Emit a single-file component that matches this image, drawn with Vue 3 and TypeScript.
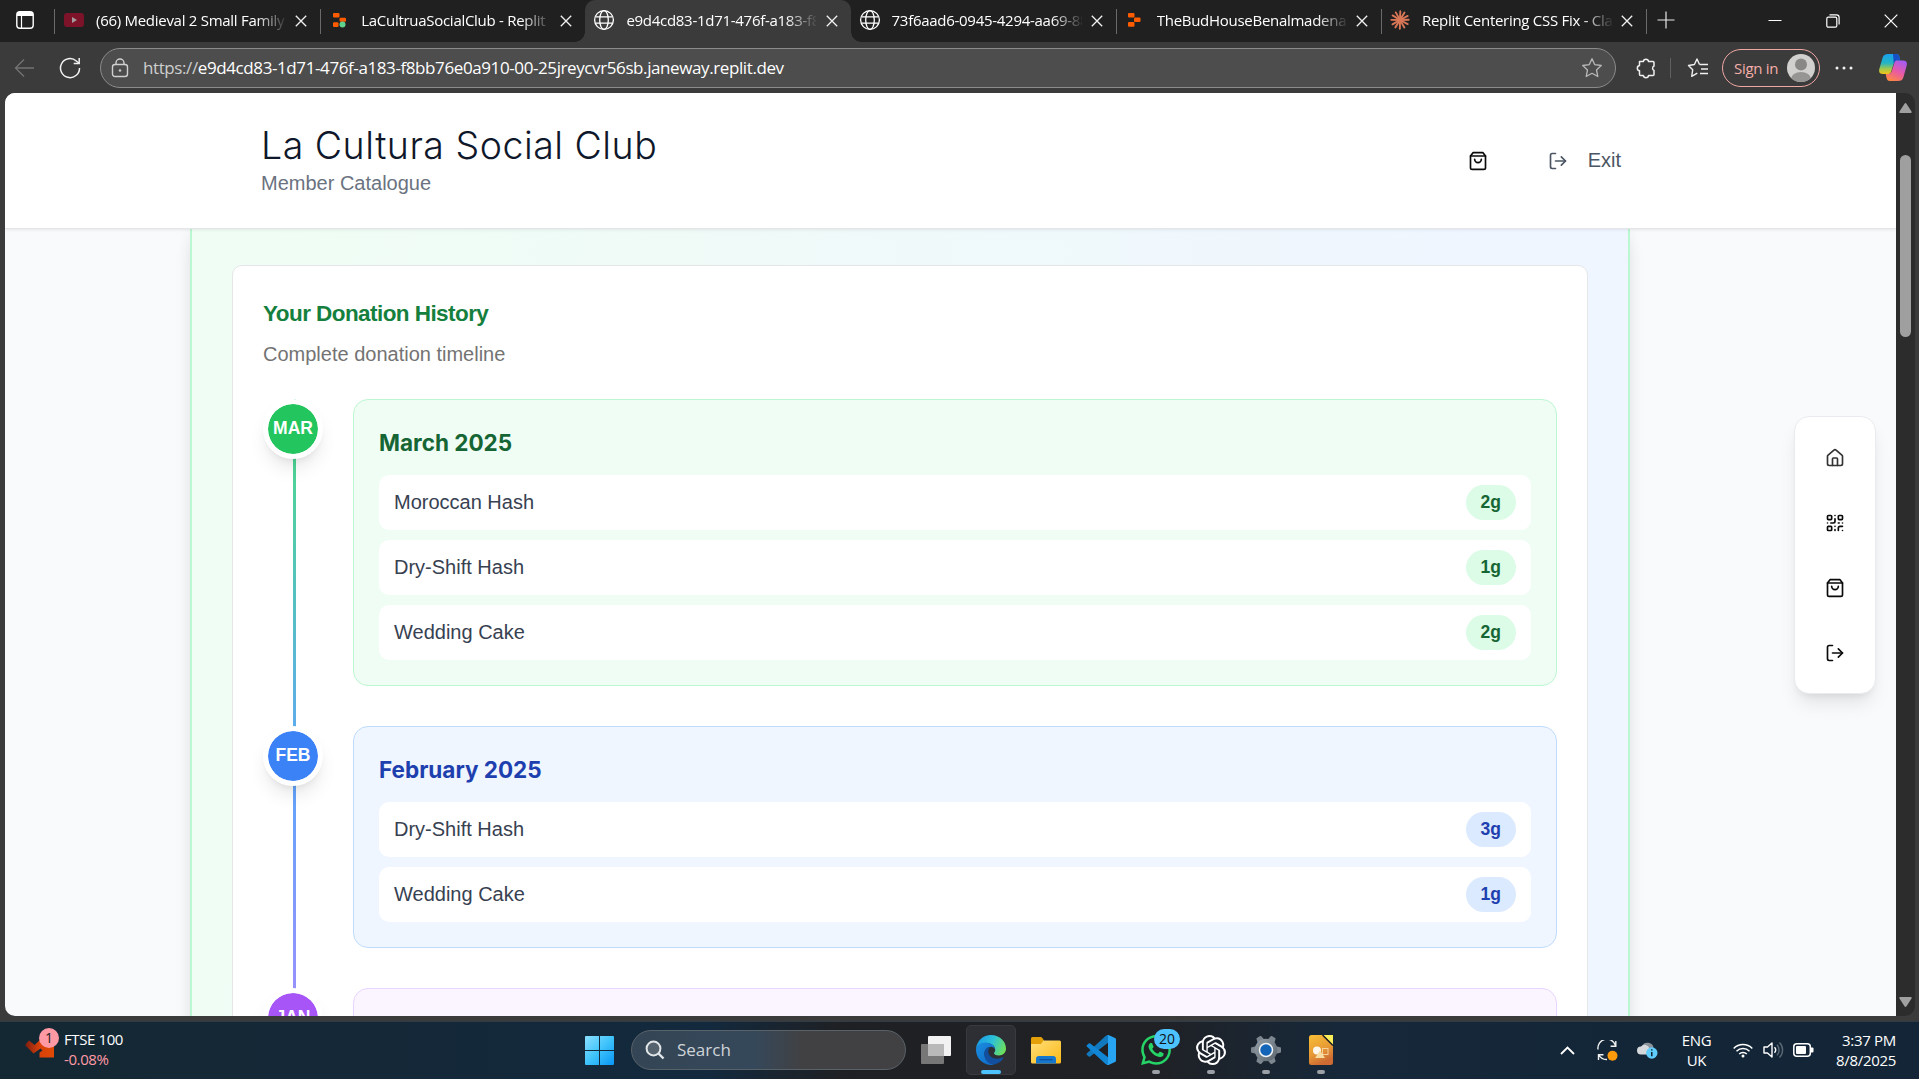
<script setup lang="ts">
interface Tab {
  title: string
  icon: 'youtube' | 'replit' | 'replitMono' | 'globe' | 'claude'
  active?: boolean
  separator?: boolean
  spacing: string
}

interface Month {
  abbr: string
  name: string
  tone: 'green' | 'blue' | 'purple'
  items: { name: string; amount: string }[]
}

const tabs: Tab[] = [
  { title: '(66) Medieval 2 Small Family Only', icon: 'youtube', separator: true, spacing: '-0.28px' },
  { title: 'LaCultruaSocialClub - Replit', icon: 'replit', spacing: '-0.28px' },
  { title: 'e9d4cd83-1d71-476f-a183-f8bb', icon: 'globe', active: true, spacing: '-0.28px' },
  { title: '73f6aad6-0945-4294-aa69-88', icon: 'globe', separator: true, spacing: '-0.28px' },
  { title: 'TheBudHouseBenalmadena - Replit', icon: 'replitMono', separator: true, spacing: '-0.28px' },
  { title: 'Replit Centering CSS Fix - Claude', icon: 'claude', separator: true, spacing: '-0.28px' },
]

const months: Month[] = [
  {
    abbr: 'MAR',
    name: 'March 2025',
    tone: 'green',
    items: [
      { name: 'Moroccan Hash', amount: '2g' },
      { name: 'Dry-Shift Hash', amount: '1g' },
      { name: 'Wedding Cake', amount: '2g' },
    ],
  },
  {
    abbr: 'FEB',
    name: 'February 2025',
    tone: 'blue',
    items: [
      { name: 'Dry-Shift Hash', amount: '3g' },
      { name: 'Wedding Cake', amount: '1g' },
    ],
  },
  { abbr: 'JAN', name: 'January 2025', tone: 'purple', items: [{ name: 'Moroccan Hash', amount: '1g' }] },
]

const rays = [2, 31, 62, 88, 118, 150, 181, 212, 240, 271, 302, 331]
const gearTeeth = [30, 90, 150, 210, 270, 330]
</script>

<template>
  <div class="screen">
    <div class="tabstrip">
      <div class="workspaces">
        <svg width="20" height="20" viewBox="0 0 20 20" fill="none">
          <rect x="1.8" y="1.8" width="16.4" height="16.4" rx="3" stroke="#fff" stroke-width="1.4" />
          <path d="M2 6V4.5A2.8 2.8 0 0 1 4.8 1.8h10.400A2.800 2.800 0 0 1 18.200 4.500V6z" fill="#fff" />
          <path d="M6.500 6v12" stroke="#fff" stroke-width="1.200" />
        </svg>
      </div>
      <div v-for="tab in tabs" :key="tab.title" class="tab" :class="{ active: tab.active, sep: tab.separator }">
        <span class="favicon">
          <svg v-if="tab.icon === 'youtube'" width="20" height="20" viewBox="0 0 20 20">
            <rect x="0" y="3" width="20" height="14" rx="3" fill="#7d1329" />
            <path d="M8 7l5 3-5 3z" fill="#a59a9c" />
          </svg>
          <svg v-else-if="tab.icon === 'replit'" width="20" height="20" viewBox="0 0 20 20">
            <rect x="4" y="3" width="6.500" height="4.500" rx="1" fill="#ff5b00" />
            <rect x="10.500" y="7.800" width="6.500" height="4" rx="1" fill="#ff5b00" />
            <rect x="4" y="12.300" width="5.500" height="4.700" rx="1" fill="#ff5b00" />
            <circle cx="13.500" cy="14.500" r="3" fill="#5fd38d" />
          </svg>
          <svg v-else-if="tab.icon === 'replitMono'" width="20" height="20" viewBox="0 0 20 20">
            <rect x="3" y="3" width="6.500" height="4.500" rx="1" fill="#ff5b00" />
            <rect x="9" y="7.500" width="6.500" height="4.500" rx="1" fill="#ff5b00" />
            <rect x="3" y="12" width="6.500" height="4.700" rx="1" fill="#ff5b00" />
          </svg>
          <svg v-else-if="tab.icon === 'globe'" width="22" height="22" viewBox="0 0 22 22" fill="none" stroke="#fff" stroke-width="1.300">
            <circle cx="11" cy="11" r="9.400" />
            <ellipse cx="11" cy="11" rx="4.300" ry="9.400" />
            <path d="M2.500 7.800h17M2.500 14.200h17" />
          </svg>
          <svg v-else width="20" height="20" viewBox="-10 -10 20 20" stroke="#d97757" stroke-width="1.900" stroke-linecap="round">
            <path v-for="r in rays" :key="r" d="M0-1V-8.700" :transform="`rotate(${r})`" />
          </svg>
        </span>
        <span class="tabtitle"><span :style="{ letterSpacing: tab.spacing }">{{ tab.title }}</span></span>
        <svg class="close" width="12" height="12" viewBox="0 0 12 12" stroke="#f2f2f2" stroke-width="1.300">
          <path d="M.8.8l10.400 10.400M11.200.8L.8 11.200" />
        </svg>
      </div>
      <svg class="newtab" width="18" height="18" viewBox="0 0 18 18" stroke="#e8e8e8" stroke-width="1.200"><path d="M9 .5v17M.5 9h17" /></svg>
      <div class="wincontrols">
        <svg width="14" height="14" viewBox="0 0 14 14" stroke="#fff"><path d="M.5 6.500h13" /></svg>
        <svg width="14" height="14" viewBox="0 0 14 14" stroke="#fff" stroke-width="1.200" fill="none">
          <rect x=".8" y="3.200" width="10" height="10" rx="1.500" />
          <path d="M3.500.9H10.500a2.600 2.600 0 0 1 2.600 2.600V10.500" />
        </svg>
        <svg width="14" height="14" viewBox="0 0 14 14" stroke="#fff" stroke-width="1.200"><path d="M.7.7l12.600 12.600M13.300.7L.7 13.300" /></svg>
      </div>
    </div>

    <div class="toolbar">
      <svg class="back" width="21" height="20" viewBox="0 0 21 20" fill="none" stroke="#737373" stroke-width="1.300"><path d="M20 10H1.500M10 1.500L1.500 10l8.500 8.500" /></svg>
      <svg class="reload" width="22" height="22" viewBox="0 0 22 22" fill="none" stroke="#f2f2f2" stroke-width="1.500">
        <path d="M20.500 11A9.500 9.500 0 1 1 17.300 4L20 6.300" />
        <path d="M20.200 1v5.500h-5.500" />
      </svg>
      <div class="urlbar">
        <svg width="18" height="20" viewBox="0 0 18 20" fill="none" stroke="#d0d0d0" stroke-width="1.400">
          <rect x="1.500" y="6.500" width="15" height="12" rx="2.500" />
          <path d="M5 6.500V5a4 4 0 0 1 8 0v1.500" />
          <circle cx="9" cy="12.500" r="1" fill="#d0d0d0" stroke-width=".6" />
        </svg>
        <span class="url"><span class="scheme">https://</span>e9d4cd83-1d71-476f-a183-f8bb76e0a910-00-25jreycvr56sb.janeway.replit.dev</span>
        <svg class="star" width="22" height="22" viewBox="0 0 22 22" fill="none" stroke="#b8b8b8" stroke-width="1.300" stroke-linejoin="round">
          <path d="M11 1.700l2.800 6 6.500.8-4.800 4.500 1.300 6.500L11 16.300l-5.800 3.200 1.300-6.500L1.700 8.500l6.500-.8z" />
        </svg>
      </div>
      <svg class="puzzle" width="22" height="22" viewBox="0 0 22 22" fill="none" stroke="#f0f0f0" stroke-width="1.500" stroke-linejoin="round">
        <path d="M4.500 4.500h3.800a2.700 2.700 0 0 1 5.300 0H18a1 1 0 0 1 1 1v3.500a2.400 2.400 0 0 0 0 4.400v4.100a1 1 0 0 1-1 1h-4.400a2.700 2.700 0 0 1-5.300 0H5.500a1 1 0 0 1-1-1v-3.700a2.700 2.700 0 0 1 0-5.300z" />
      </svg>
      <span class="tooldivider"></span>
      <svg class="favorites" width="22" height="22" viewBox="0 0 22 22" fill="none" stroke="#f0f0f0" stroke-width="1.400" stroke-linejoin="round">
        <path d="M12.500 7.500L10 2 7.400 7.500 1.500 8.500l4.200 4.300-1 6.500L10.300 16.200" />
        <path d="M12.500 7.500h8.500M14 12h7M13 16.500h8" />
      </svg>
      <div class="signin">
        <span>Sign in</span>
        <svg width="28" height="28" viewBox="0 0 28 28">
          <defs><clipPath id="avatarClip"><circle cx="14" cy="14" r="14" /></clipPath></defs>
          <g clip-path="url(#avatarClip)">
            <rect width="28" height="28" fill="#d2d0ce" />
            <circle cx="14" cy="10.500" r="6" fill="#8a8886" />
            <ellipse cx="14" cy="25" rx="10" ry="7" fill="#979593" />
          </g>
        </svg>
      </div>
      <svg class="dots" width="18" height="4" viewBox="0 0 18 4" fill="#f2f2f2"><circle cx="2" cy="2" r="1.500" /><circle cx="9" cy="2" r="1.500" /><circle cx="16" cy="2" r="1.500" /></svg>
      <svg class="copilot" width="28" height="27" viewBox="0 0 28 27">
        <defs>
          <linearGradient id="cpa" x1="0" y1="0" x2="0" y2="1"><stop offset="0" stop-color="#1aa0ee" /><stop offset=".45" stop-color="#22b5c5" /><stop offset=".75" stop-color="#a5c84a" /><stop offset="1" stop-color="#f5c518" /></linearGradient>
          <linearGradient id="cpb" x1=".7" y1="0" x2=".2" y2="1"><stop offset="0" stop-color="#a75bf0" /><stop offset=".5" stop-color="#e85aa5" /><stop offset="1" stop-color="#ff8a3c" /></linearGradient>
        </defs>
        <path d="M9 0h8c2.500 0 3 1.500 3.700 4l.6 2.500h-3c-2 0-3 1-3.600 3l-2.500 8c-.6 2-1.500 2.500-3.500 2.500H4c-3 0-4.500-1.500-3.700-5L3.500 4C4.500 1 6 0 9 0z" fill="url(#cpa)" />
        <path d="M14 0h3c2.500 0 3 1.500 3.700 4l.6 2.500h-3c-2 0-3 1-3.600 3z" fill="#1550c8" />
        <path d="M19 27h-8c-2.500 0-3-1.500-3.700-4L6.700 20h2.500c2 0 3-1 3.600-3l2.500-8c.6-2 1.500-2.500 3.500-2.500H24c3 0 4.500 1.500 3.700 5L24.500 23c-1 3-2.500 4-5.500 4z" fill="url(#cpb)" />
      </svg>
    </div>

    <div class="window">
      <div class="viewport">
        <header class="siteheader">
          <div class="brand">
            <h1>La Cultura Social Club</h1>
            <p>Member Catalogue</p>
          </div>
          <nav class="actions">
            <svg class="lucide bag" viewBox="0 0 24 24"><path d="M6 2 3 6v14a2 2 0 0 0 2 2h14a2 2 0 0 0 2-2V6l-3-4Z" /><path d="M3 6h18" /><path d="M16 10a4 4 0 0 1-8 0" /></svg>
            <span class="exit">
              <svg class="lucide" viewBox="0 0 24 24"><path d="M9 21H5a2 2 0 0 1-2-2V5a2 2 0 0 1 2-2h4" /><path d="m16 17 5-5-5-5" /><path d="M21 12H9" /></svg>
              <span>Exit</span>
            </span>
          </nav>
        </header>

        <main class="content">
          <section class="panel">
            <div class="history">
              <h2>Your Donation History</h2>
              <p class="subtitle">Complete donation timeline</p>
              <div class="timeline">
                <div class="track"></div>
                <article v-for="m in months" :key="m.abbr" class="month" :class="m.tone">
                  <div class="marker">{{ m.abbr }}</div>
                  <div class="card">
                    <h3>{{ m.name }}</h3>
                    <div class="rows">
                      <div v-for="item in m.items" :key="item.name" class="row">
                        <span>{{ item.name }}</span>
                        <span class="amount">{{ item.amount }}</span>
                      </div>
                    </div>
                  </div>
                </article>
              </div>
            </div>
          </section>
        </main>

        <aside class="dock">
          <svg class="lucide home" viewBox="0 0 24 24"><path d="M15 21v-8a1 1 0 0 0-1-1h-4a1 1 0 0 0-1 1v8" /><path d="M3 10a2 2 0 0 1 .709-1.528l7-5.999a2 2 0 0 1 2.582 0l7 5.999A2 2 0 0 1 21 10v9a2 2 0 0 1-2 2H5a2 2 0 0 1-2-2z" /></svg>
          <svg class="lucide" viewBox="0 0 24 24"><rect width="5" height="5" x="3" y="3" rx="1" /><rect width="5" height="5" x="16" y="3" rx="1" /><rect width="5" height="5" x="3" y="16" rx="1" /><path d="M21 16h-3a2 2 0 0 0-2 2v3" /><path d="M21 21v.01" /><path d="M12 7v3a2 2 0 0 1-2 2H7" /><path d="M3 12h.01" /><path d="M12 3h.01" /><path d="M12 16v.01" /><path d="M16 12h1" /><path d="M21 12v.01" /><path d="M12 21v-1" /></svg>
          <svg class="lucide" viewBox="0 0 24 24"><path d="M6 2 3 6v14a2 2 0 0 0 2 2h14a2 2 0 0 0 2-2V6l-3-4Z" /><path d="M3 6h18" /><path d="M16 10a4 4 0 0 1-8 0" /></svg>
          <svg class="lucide" viewBox="0 0 24 24"><path d="M9 21H5a2 2 0 0 1-2-2V5a2 2 0 0 1 2-2h4" /><path d="m16 17 5-5-5-5" /><path d="M21 12H9" /></svg>
        </aside>
      </div>
      <div class="scrollbar">
        <svg width="13" height="10" viewBox="0 0 13 10" fill="#a0a0a0"><path d="M5.500.8a1.200 1.200 0 0 1 2 0L12.500 8.500a1 1 0 0 1-.8 1.500H1.300a1 1 0 0 1-.8-1.500z" /></svg>
        <div class="thumb"></div>
        <svg class="down" width="13" height="10" viewBox="0 0 13 10" fill="#a0a0a0"><path d="M5.500 9.200a1.200 1.200 0 0 0 2 0L12.500 1.500a1 1 0 0 0-.8-1.500H1.300a1 1 0 0 0-.8 1.500z" /></svg>
      </div>
    </div>

    <footer class="taskbar">
      <div class="widget">
        <div class="stock">
          <svg width="30" height="20" viewBox="0 0 30 20">
            <defs><linearGradient id="stk" x1="0" y1="0" x2="1" y2="0"><stop offset="0" stop-color="#7c1d10" /><stop offset=".5" stop-color="#d8400a" /><stop offset="1" stop-color="#e04a05" /></linearGradient></defs>
            <path d="M0 7l4-4.500 5.500 4.500 6-5.500 7.500 6.500 6-4V19.500H14.500v-5l3-2-2-2-7 5z" fill="url(#stk)" />
          </svg>
          <span class="count">1</span>
        </div>
        <div class="quote"><span>FTSE 100</span><span class="loss">-0.08%</span></div>
      </div>

      <div class="apps">
        <svg class="start" width="29" height="29" viewBox="0 0 29 29">
          <defs><linearGradient id="win" x1="0" y1="0" x2="1" y2="1"><stop offset="0" stop-color="#8be0ff" /><stop offset=".5" stop-color="#3fc3fb" /><stop offset="1" stop-color="#0896f5" /></linearGradient></defs>
          <path d="M1 0h13v14H0V1a1 1 0 0 1 1-1zM15 0h13a1 1 0 0 1 1 1v13H15zM0 15h14v14H1a1 1 0 0 1-1-1zM15 15h14v13a1 1 0 0 1-1 1H15z" fill="url(#win)" />
        </svg>
        <div class="search">
          <svg width="20" height="20" viewBox="0 0 20 20" fill="none" stroke="#e3e6e8" stroke-width="2"><circle cx="8.500" cy="8.500" r="6.900" fill="#55636e" /><path d="M13.500 13.500l5 5" stroke-width="2.400" /></svg>
          <span>Search</span>
        </div>
        <svg class="taskview" width="30" height="28" viewBox="0 0 30 28"><rect x="7" width="23" height="20" rx="1" fill="#f2f2f2" /><rect y="8" width="23" height="20" rx="1" fill="#8d8d8d" fill-opacity=".8" /><rect x="7" y="8" width="16" height="12" fill="#b9b9b9" /></svg>
        <div class="app current">
          <svg width="30" height="30" viewBox="0 0 30 30">
            <defs>
              <linearGradient id="eg1" x1="0" y1=".3" x2="1" y2=".6"><stop offset="0" stop-color="#1a9be8" /><stop offset=".5" stop-color="#2cc0d8" /><stop offset="1" stop-color="#6fe05a" /></linearGradient>
              <linearGradient id="eg2" x1="0" y1="0" x2="1" y2="1"><stop offset="0" stop-color="#1b8fe0" /><stop offset="1" stop-color="#0d66c4" /></linearGradient>
            </defs>
            <path d="M0 14C.7 6 7 0 15 0c9 0 15 6.500 15 13.500 0 4-3 7-7 7-3.500 0-5-1.300-5-2.300 0-.7 1.200-1.300 1.200-3.500C19.200 11 15.500 8 10 8 5 8 1.500 10.500 0 14z" fill="url(#eg1)" />
            <path d="M0 15c0-4.500 4-7.500 9-7.500s10 2.500 10.200 7c-1-1.700-2.500-2.700-4.200-2.700-4 0-6.500 3-6.500 7 0 5.500 4 9.500 9.500 10.900A15 15 0 0 1 0 15z" fill="url(#eg2)" />
            <path d="M12.300 12.300C9.700 13.500 8.300 16 8.300 19c0 6 4.700 10.500 10 10.600 4-1 7-3.200 9-6.300.3-.6-.2-1-.8-.7-5.500 2.600-13.500.6-14.200-5.300-.2-2 .5-4 2-5.300z" fill="#124f9e" />
          </svg>
          <i></i>
        </div>
        <div class="app">
          <svg width="30" height="30" viewBox="0 0 30 30">
            <defs><linearGradient id="fld" x1="0" y1="0" x2="1" y2="1"><stop offset="0" stop-color="#ffdf7a" /><stop offset="1" stop-color="#fbb917" /></linearGradient></defs>
            <path d="M0 3.500A1.500 1.500 0 0 1 1.500 2h8c1 0 1.500.5 2.500 2l1 1.500V10H0z" fill="#e3a008" />
            <path d="M0 9h10l2.500-3.500H28.500A1.500 1.500 0 0 1 30 7v20a1.500 1.500 0 0 1-1.500 1.500h-27A1.500 1.500 0 0 1 0 27z" fill="url(#fld)" />
            <path d="M5 28.500V24a3 3 0 0 1 3-3h14a3 3 0 0 1 3 3v4.500z" fill="#1677cf" /><path d="M8.500 24.700h13" stroke="#0d529c" stroke-width="1.300" />
          </svg>
        </div>
        <div class="app">
          <svg width="30" height="30" viewBox="0 0 30 30">
            <path d="M22 0l-2.500 1L1 18.300c-.6.6-.6 1.200 0 1.700l1.700 1.500c.5.400 1 .4 1.500.1L22 7.800z" fill="#1279be" />
            <path d="M22 30l-2.500-1L1 11.700c-.6-.6-.6-1.200 0-1.700l1.700-1.500c.5-.4 1-.4 1.500-.1L22 22.200z" fill="#1186d4" />
            <path d="M21.500.2L22.500 0l6.500 3c.7.3 1 .8 1 1.500v21c0 .7-.3 1.200-1 1.500l-6.500 3c-1 .2-1.700 0-2.500-.8 1 .7 2 .2 2-1V1.800c0-1.200-1-1.700-2-1z" fill="#27a4f2" />
          </svg>
        </div>
        <div class="app">
          <svg width="30" height="30" viewBox="0 0 24 24" fill="#25d366"><path d="M17.472 14.382c-.297-.149-1.758-.867-2.030-.967-.273-.099-.471-.148-.670.150-.197.297-.767.966-.940 1.164-.173.199-.347.223-.644.075-.297-.150-1.255-.463-2.390-1.475-.883-.788-1.480-1.761-1.653-2.059-.173-.297-.018-.458.130-.606.134-.133.298-.347.446-.520.149-.174.198-.298.298-.497.099-.198.050-.371-.025-.520-.075-.149-.669-1.612-.916-2.207-.242-.579-.487-.500-.669-.510-.173-.008-.371-.010-.570-.010-.198 0-.520.074-.792.372-.272.297-1.040 1.016-1.040 2.479 0 1.462 1.065 2.875 1.213 3.074.149.198 2.096 3.200 5.077 4.487.709.306 1.262.489 1.694.625.712.227 1.360.195 1.871.118.571-.085 1.758-.719 2.006-1.413.248-.694.248-1.289.173-1.413-.074-.124-.272-.198-.570-.347m-5.421 7.403h-.004a9.870 9.870 0 0 1-5.031-1.378l-.361-.214-3.741.982.998-3.648-.235-.374a9.860 9.860 0 0 1-1.510-5.260c.001-5.450 4.436-9.884 9.888-9.884 2.640 0 5.122 1.030 6.988 2.898a9.825 9.825 0 0 1 2.893 6.994c-.003 5.450-4.437 9.884-9.885 9.884m8.413-18.297A11.815 11.815 0 0 0 12.050 0C5.495 0 .160 5.335.157 11.892c0 2.096.547 4.142 1.588 5.945L.057 24l6.305-1.654a11.882 11.882 0 0 0 5.683 1.448h.005c6.554 0 11.890-5.335 11.893-11.893a11.821 11.821 0 0 0-3.480-8.413Z" /></svg>
          <span class="badge">20</span>
          <i></i>
        </div>
        <div class="app">
          <svg width="30" height="30" viewBox="0 0 24 24" fill="#fff"><path d="M22.2819 9.8211a5.9847 5.9847 0 0 0-.5157-4.9108 6.0462 6.0462 0 0 0-6.5098-2.9A6.0651 6.0651 0 0 0 4.9807 4.1818a5.9847 5.9847 0 0 0-3.9977 2.9 6.0462 6.0462 0 0 0 .7427 7.0966 5.98 5.98 0 0 0 .511 4.9107 6.051 6.051 0 0 0 6.5146 2.9001A5.9847 5.9847 0 0 0 13.2599 24a6.0557 6.0557 0 0 0 5.7718-4.2058 5.9894 5.9894 0 0 0 3.9977-2.9001 6.0557 6.0557 0 0 0-.7475-7.0729zm-9.022 12.6081a4.4755 4.4755 0 0 1-2.8764-1.0408l.1419-.0804 4.7783-2.7582a.7948.7948 0 0 0 .3927-.6813v-6.7369l2.02 1.1686a.071.071 0 0 1 .038.052v5.5826a4.504 4.504 0 0 1-4.4945 4.4944zm-9.6607-4.1254a4.4708 4.4708 0 0 1-.5346-3.0137l.142.0852 4.783 2.7582a.7712.7712 0 0 0 .7806 0l5.8428-3.3685v2.3324a.0804.0804 0 0 1-.0332.0615L9.74 19.9502a4.4992 4.4992 0 0 1-6.1408-1.6464zM2.3408 7.8956a4.485 4.485 0 0 1 2.3655-1.9728V11.6a.7664.7664 0 0 0 .3879.6765l5.8144 3.3543-2.0201 1.1685a.0757.0757 0 0 1-.071 0l-4.8303-2.7865A4.504 4.504 0 0 1 2.3408 7.872zm16.5963 3.8558L13.1038 8.364 15.1192 7.2a.0757.0757 0 0 1 .071 0l4.8303 2.7913a4.4944 4.4944 0 0 1-.6765 8.1042v-5.6772a.79.79 0 0 0-.407-.667zm2.0107-3.0231l-.142-.0852-4.7735-2.7818a.7759.7759 0 0 0-.7854 0L9.409 9.2297V6.8974a.0662.0662 0 0 1 .0284-.0615l4.8303-2.7866a4.4992 4.4992 0 0 1 6.6802 4.66zM8.3065 12.863l-2.02-1.1638a.0804.0804 0 0 1-.038-.0567V6.0742a4.4992 4.4992 0 0 1 7.3757-3.4537l-.142.0805L8.704 5.459a.7948.7948 0 0 0-.3927.6813zm1.0976-2.3654l2.602-1.4998 2.6069 1.4998v2.9994l-2.5974 1.4997-2.6067-1.4997Z" /></svg>
          <i></i>
        </div>
        <div class="app">
          <svg width="30" height="30" viewBox="-15 -15 30 30">
            <defs><linearGradient id="gear" x1="0" y1="0" x2="1" y2="1"><stop offset="0" stop-color="#95a0a8" /><stop offset="1" stop-color="#5b656e" /></linearGradient></defs>
            <g fill="#7b868f"><path v-for="t in gearTeeth" :key="t" d="M-4-9l1.200-5.200q.2-.8 1-.8h3.600q.8 0 1 .8L4-9z" :transform="`rotate(${t})`" /></g>
            <circle r="11.300" fill="url(#gear)" />
            <circle r="6.500" fill="#1464b8" stroke="#f2f4f5" stroke-width="1.500" />
          </svg>
          <i></i>
        </div>
        <div class="app">
          <svg width="24" height="30" viewBox="0 0 24 30">
            <defs><linearGradient id="doc" x1="0" y1="0" x2=".4" y2="1"><stop offset="0" stop-color="#f8bf36" /><stop offset=".6" stop-color="#e79a35" /><stop offset="1" stop-color="#cd6b33" /></linearGradient></defs>
            <path d="M2.500 0H14L24 10.500V27.500A2.500 2.500 0 0 1 21.500 30h-19A2.500 2.500 0 0 1 0 27.500v-25A2.500 2.500 0 0 1 2.500 0z" fill="url(#doc)" />
            <path d="M14 0H24V10z" fill="#f9ee5a" /><path d="M13.500 0L24 10.500" stroke="#222" stroke-width="1.500" />
            <circle cx="8" cy="15.500" r="4" fill="#fdf7ee" /><rect x="13.500" y="13.500" width="5.500" height="6" fill="none" stroke="#f6d29a" /><path d="M11 15.500L16 23H6z" fill="#f7dba0" />
          </svg>
          <i></i>
        </div>
      </div>

      <div class="tray">
        <svg class="chev" width="15" height="9" viewBox="0 0 15 9" fill="none" stroke="#fff" stroke-width="1.800"><path d="M1 8l6.500-6.500L14 8" /></svg>
        <svg class="sync" width="21" height="21" viewBox="0 0 21 21" fill="none" stroke="#f0f0f0" stroke-width="1.400"><path d="M1 9.500A9 9 0 0 1 18.500 5.500M18.800 1v5.200h-5.200" /><path d="M1.500 20v-5.200h5M1.800 15A9 9 0 0 0 10 19.500" /><circle cx="15.500" cy="15.700" r="5" fill="#ff9a0a" stroke="none" /></svg>
        <svg class="cloud" width="21" height="18" viewBox="0 0 21 18"><path d="M5 5a6 5.500 0 0 1 11.500 2L12 12H7z" fill="#8b939a" /><path d="M4 13.500a4 4 0 0 1 0-8 5 5 0 0 1 8.500 2L10 13.500z" fill="#d5d9dc" /><circle cx="14.800" cy="12" r="5.700" fill="#60cdff" /><path d="M14.800 11v4.200M14.800 8.300v1.300" stroke="#123" stroke-width="1.500" /></svg>
        <div class="lang"><span>ENG</span><span>UK</span></div>
        <svg class="wifi" width="20" height="16" viewBox="0 0 20 16" fill="none" stroke="#fff" stroke-width="1.500"><path d="M.7 6.500a13 13 0 0 1 18.600 0M3.500 9.300a9.200 9.200 0 0 1 13 0M6.200 12a5.400 5.400 0 0 1 7.600 0" /><circle cx="10" cy="14" r="1.500" fill="#fff" stroke="none" /></svg>
        <svg class="volume" width="21" height="18" viewBox="0 0 21 18" fill="none" stroke="#fff" stroke-width="1.400" stroke-linejoin="round"><path d="M1 6h3.500L9 2v14l-4.500-4H1z" /><path d="M11.500 6.300a4 4 0 0 1 0 5.400" /><path d="M14 3.800a7.500 7.500 0 0 1 0 10.400M16.500 1.500a10.700 10.700 0 0 1 0 15" stroke="#5d6a75" /></svg>
        <svg class="battery" width="21" height="14" viewBox="0 0 21 14" fill="none"><rect x=".8" y=".8" width="16.500" height="12.400" rx="3" stroke="#fff" stroke-width="1.500" /><rect x="3" y="3" width="10" height="8" rx="1" fill="#fff" /><path d="M18 4.500h1.500a1 1 0 0 1 1 1v3a1 1 0 0 1-1 1H18z" fill="#fff" /></svg>
        <div class="clock"><span>3:37 PM</span><span>8/8/2025</span></div>
      </div>
    </footer>
  </div>
</template>

<style>
body {
  background: #3b3b3b;
  overflow: hidden;
}
</style>

<style scoped>
.screen {
  width: 1919px;
  height: 1079px;
  display: flex;
  flex-direction: column;
  overflow: hidden;
  background: #3b3b3b;
  font-family: 'Liberation Sans', Arial, sans-serif;
}
svg { display: block; flex: none; }
h1, h2, h3, p { margin: 0; }

.tabstrip {
  height: 42px;
  flex: none;
  display: flex;
  background: #202020;
  font: 15px/20px 'Open Sans', sans-serif;
  color: #fff;
}
.workspaces {
  width: 55px;
  box-sizing: border-box;
  padding: 10px 0 0 15px;
  border-right: 1px solid #202020;
  position: relative;
}
.workspaces::after, .sep::after {
  content: '';
  position: absolute;
  right: -1px;
  top: 9px;
  width: 1px;
  height: 25px;
  background: #6a6a6a;
}
.tab {
  position: relative;
  width: 265.2px;
  height: 42px;
  box-sizing: border-box;
  padding: 0 13px 3px 9px;
  display: flex;
  align-items: center;
}
.tab.active {
  background: #3b3b3b;
  border-radius: 10px 10px 0 0;
}
.tab.active::before, .tab.active::after {
  content: '';
  position: absolute;
  bottom: 0;
  width: 10px;
  height: 10px;
}
.tab.active::before { left: -10px; background: radial-gradient(circle at 0 0, transparent 9.500px, #3b3b3b 10px); }
.tab.active::after { right: -10px; background: radial-gradient(circle at 100% 0, transparent 9.500px, #3b3b3b 10px); }
.favicon { width: 20px; display: flex; justify-content: center; margin-right: 12px; }
.tabtitle {
  width: 190px;
  overflow: hidden;
  white-space: nowrap;
  mask-image: linear-gradient(90deg, #000 160px, transparent 192px);
}
.close { margin: 2px 0 0 auto; }
.newtab { margin: 11px 0 0 11px; }
.wincontrols {
  margin: 14px 21px 0 auto;
  display: flex;
  gap: 44px;
}

.toolbar {
  height: 51px;
  flex: none;
  display: flex;
  align-items: center;
  font-family: 'Open Sans', sans-serif;
}
.back { margin-left: 14px; }
.reload { margin-left: 24px; }
.urlbar {
  margin: 0 0 0 19px;
  width: 1516px;
  height: 40px;
  box-sizing: border-box;
  border: 1px solid #8b8b8b;
  border-radius: 20px;
  background: #4d4d4d;
  display: flex;
  align-items: center;
  padding: 0 12px 0 10px;
  color: #fff;
}
.url { margin-left: 14px; font-size: 17px; letter-spacing: -0.4px; white-space: nowrap; }
.scheme { color: #cfcfcf; }
.star { margin-left: auto; }
.puzzle { margin-left: 19px; }
.tooldivider { width: 1px; height: 20px; background: #606060; margin-left: 13px; }
.favorites { margin-left: 16px; }
.signin {
  margin-left: 13px;
  width: 98px;
  height: 38px;
  box-sizing: border-box;
  border: 1.500px solid #f0a8a5;
  border-radius: 19px;
  display: flex;
  align-items: center;
  justify-content: space-between;
  padding: 0 4px 0 11px;
  font-size: 15px;
  letter-spacing: -0.3px;
  color: #f5aeaa;
}
.dots { margin-left: 15px; }
.copilot { margin-left: 26px; }

.window {
  flex: none;
  display: flex;
  height: 923px;
  margin: 0 4px 5px 5px;
}
.viewport {
  position: relative;
  width: 1891px;
  overflow: hidden;
  background: #f8fafc;
  border-radius: 10px 0 0 10px;
  display: flex;
  flex-direction: column;
}
.siteheader {
  position: relative;
  z-index: 1;
  flex: none;
  display: flex;
  justify-content: space-between;
  align-items: center;
  padding: 30px 275px 30px 256px;
  background: #fff;
  border-bottom: 1px solid #e3e5e8;
  box-shadow: 0 1px 3px rgba(0, 0, 0, 0.08);
}
h1 {
  font: 300 37.500px/45px Inter, sans-serif;
  letter-spacing: 0.5px;
  color: #0f172a;
}
.brand p { font-size: 20px; line-height: 30px; color: #6b7280; }
.actions { display: flex; align-items: center; gap: 60px; }
.lucide {
  width: 20px;
  height: 20px;
  fill: none;
  stroke: currentColor;
  stroke-width: 2;
  stroke-linecap: round;
  stroke-linejoin: round;
  color: #0a0a0a;
}
.exit { display: flex; align-items: center; gap: 20px; font-size: 20px; color: #4b5563; }
.exit .lucide { color: #4b5563; }

.content { flex: 1; min-height: 0; }
.panel {
  margin-left: 185px;
  width: 1440px;
  height: 1100px;
  box-sizing: border-box;
  padding: 36px 40px;
  border: 2px solid #bbf7d0;
  border-width: 0 2px;
  background: linear-gradient(100deg, #f0fdf4 5%, #eff6ff 78%);
  box-shadow: 0 12px 19px -4px rgba(0, 0, 0, 0.1), 0 0 14px rgba(0, 0, 0, 0.05);
}
.history {
  box-sizing: border-box;
  height: 1040px;
  padding: 30px;
  background: #fff;
  border: 1px solid #e4e6e8;
  border-radius: 10px;
}
h2 {
  font-size: 22.500px;
  line-height: 35px;
  letter-spacing: -0.5625px;
  color: #15803d;
}
.subtitle {
  margin: 8px 0 30px;
  font-size: 20px;
  line-height: 30px;
  color: #737373;
}
.timeline {
  position: relative;
  display: flex;
  flex-direction: column;
  gap: 40px;
}
.track {
  position: absolute;
  left: 30px;
  top: 0;
  width: 3px;
  height: 752px;
  background: linear-gradient(#4ade80, #60a5fa, #c084fc);
}
.month { position: relative; display: flex; align-items: flex-start; gap: 30px; }
.marker {
  width: 60px;
  height: 60px;
  box-sizing: border-box;
  flex: none;
  border: 5px solid #fff;
  border-radius: 50%;
  display: flex;
  justify-content: center;
  font-size: 17.500px;
  line-height: 49px;
  font-weight: 700;
  color: #fff;
  box-shadow: 0 12px 19px -4px rgba(0, 0, 0, 0.1), 0 5px 8px -5px rgba(0, 0, 0, 0.1);
}
.card {
  flex: 1;
  border: 1px solid;
  border-radius: 15px;
  padding: 25px;
}
h3 { font: 700 22.500px/35px Inter, sans-serif; margin-bottom: 15px; }
.rows { display: flex; flex-direction: column; gap: 10px; }
.row {
  height: 55px;
  box-sizing: border-box;
  padding: 0 15px;
  display: flex;
  align-items: center;
  justify-content: space-between;
  border-radius: 10px;
  background: #fff;
  font-size: 20px;
  color: #374151;
}
.amount {
  padding: 5px 15px;
  border-radius: 18px;
  font-size: 17.500px;
  line-height: 25px;
  font-weight: 700;
}
.green .marker { background: #22c55e; }
.green .card { background: #f0fdf4; border-color: #bbf7d0; }
.green h3 { color: #166534; }
.green .amount { background: #dcfce7; color: #166534; }
.blue .marker { background: #3b82f6; }
.blue .card { background: #eff6ff; border-color: #bfdbfe; }
.blue h3 { color: #1e40af; }
.blue .amount { background: #dbeafe; color: #1e40af; }
.purple .marker { background: #a855f7; }
.purple .card { background: #faf5ff; border-color: #e9d5ff; }
.purple h3 { color: #6b21a8; }
.purple .amount { background: #f3e8ff; color: #6b21a8; }
.marker { background-clip: padding-box !important; background-color: #fff; }

.dock {
  position: absolute;
  z-index: 2;
  right: 20px;
  top: 323px;
  width: 82px;
  height: 278px;
  box-sizing: border-box;
  padding-top: 31px;
  display: flex;
  flex-direction: column;
  align-items: center;
  gap: 45px;
  background: #fff;
  border: 1px solid #e9ebee;
  border-radius: 15px;
  box-shadow: 0 12px 19px -4px rgba(0, 0, 0, 0.1), 0 5px 8px -5px rgba(0, 0, 0, 0.1);
}
.dock .home { color: #333; }

.scrollbar {
  width: 19px;
  box-sizing: border-box;
  padding: 10px 0 9px 3px;
  background: #2c2c2c;
  border-radius: 0 10px 10px 0;
  display: flex;
  flex-direction: column;
}
.thumb {
  width: 11px;
  height: 182px;
  margin: 42px 0 0 1px;
  border-radius: 5.500px;
  background: #9f9f9f;
}
.down { margin-top: auto; }

.taskbar {
  flex: none;
  height: 58px;
  display: flex;
  background: linear-gradient(90deg, #142833 0, #142838 20%, #13293d 37%, #1f2023 44%, #202125 60%, #16283a 70%, #132637 85%, #132536 100%);
  box-shadow: inset 0 1px #2f3b45;
  font: 15px/20px 'Open Sans', sans-serif;
  color: #fff;
}
.widget { width: 585px; display: flex; padding: 8px 0 0 25px; box-sizing: border-box; }
.stock { position: relative; width: 30px; padding-top: 9px; }
.count {
  position: absolute;
  left: 14px;
  top: -1px;
  width: 20px;
  height: 20px;
  border-radius: 50%;
  background: #ff99a4;
  color: #222;
  text-align: center;
  font-size: 14px;
}
.quote { margin-left: 9px; display: flex; flex-direction: column; letter-spacing: -0.4px; }
.loss { color: #ff99a4; }
.apps { display: flex; align-items: center; }
.search {
  margin: 0 15px 0 17px;
  width: 275px;
  height: 40px;
  box-sizing: border-box;
  border: 1px solid #5a6269;
  border-radius: 20px;
  background: linear-gradient(90deg, #344655, #35485a 45%, #414143 62%, #414143);
  display: flex;
  align-items: center;
  gap: 12px;
  padding-left: 13px;
  font-size: 17px;
  color: #d0d4d8;
}
.taskview { margin-right: 15px; }
.app {
  position: relative;
  width: 50px;
  height: 50px;
  margin-right: 5px;
  box-sizing: border-box;
  border-radius: 5px;
  display: flex;
  align-items: center;
  justify-content: center;
}
.app.current { background: #2d2f34; border: 1px solid #383a3f; }
.app i {
  position: absolute;
  bottom: 1px;
  left: 21px;
  width: 8px;
  height: 4px;
  border-radius: 2px;
  background: #9aa0a5;
}
.app.current i { left: 14px; bottom: 0; width: 20px; background: #4cc2ff; }
.badge {
  position: absolute;
  left: 23px;
  top: 4px;
  width: 26px;
  height: 20px;
  border-radius: 10px;
  background: #4cc2ff;
  color: #111;
  text-align: center;
  font-size: 14px;
}
.tray {
  margin-left: auto;
  padding-right: 23px;
  display: flex;
  align-items: center;
}
.sync { margin-left: 22px; }
.cloud { margin-left: 19px; }
.lang { margin-left: 24px; width: 29px; display: flex; flex-direction: column; align-items: center; letter-spacing: -0.3px; }
.wifi { margin-left: 22px; }
.volume { margin-left: 10px; }
.battery { margin-left: 9px; }
.clock { margin-left: 20px; width: 62px; display: flex; flex-direction: column; align-items: flex-end; letter-spacing: -0.3px; white-space: nowrap; }
</style>
